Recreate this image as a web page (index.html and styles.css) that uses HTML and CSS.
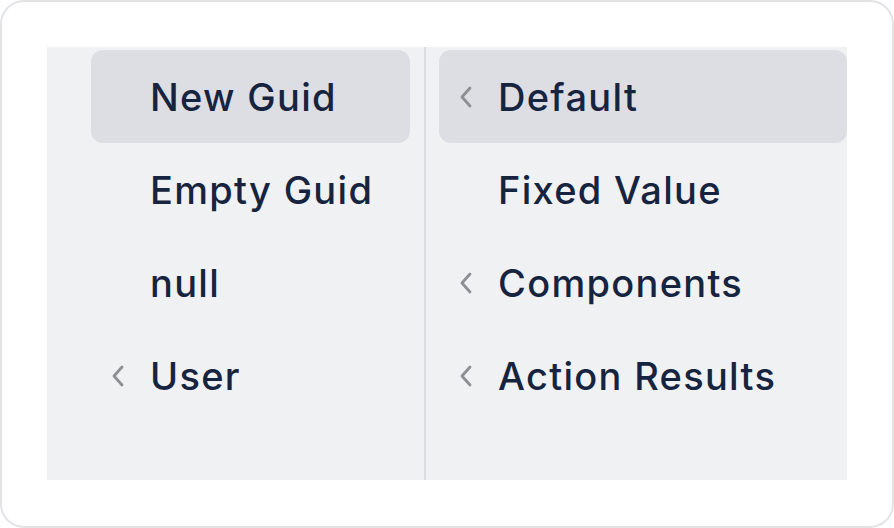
FILE: index.html
```html
<!DOCTYPE html>
<html>
<head>
<meta charset="utf-8">
<link rel="stylesheet" href="styles.css">
</head>
<body>
<div class="card">
  <div class="panel">
    <div class="col col-left">
      <div class="item active"><span class="chev"></span><span class="label">New Guid</span></div>
      <div class="item"><span class="chev"></span><span class="label">Empty Guid</span></div>
      <div class="item"><span class="chev"></span><span class="label">null</span></div>
      <div class="item"><span class="chev"><svg viewBox="0 0 14 22" width="14" height="22"><polyline points="11,2 3,11 11,20"/></svg></span><span class="label">User</span></div>
    </div>
    <div class="col col-right">
      <div class="item active"><span class="chev"><svg viewBox="0 0 14 22" width="14" height="22"><polyline points="11,2 3,11 11,20"/></svg></span><span class="label">Default</span></div>
      <div class="item"><span class="chev"></span><span class="label">Fixed Value</span></div>
      <div class="item"><span class="chev"><svg viewBox="0 0 14 22" width="14" height="22"><polyline points="11,2 3,11 11,20"/></svg></span><span class="label">Components</span></div>
      <div class="item"><span class="chev"><svg viewBox="0 0 14 22" width="14" height="22"><polyline points="11,2 3,11 11,20"/></svg></span><span class="label">Action Results</span></div>
    </div>
  </div>
</div>
</body>
</html>
```
FILE: styles.css
```css
html, body {
  margin: 0;
  padding: 0;
  background: #ffffff;
}
.card {
  box-sizing: border-box;
  width: 894px;
  height: 528px;
  border: 2px solid #e2e4e8;
  border-radius: 24px;
  padding: 45px;
  background: #ffffff;
}
.panel {
  width: 800px;
  height: 433px;
  background: #f0f1f3;
  display: flex;
}
.col {
  box-sizing: border-box;
  padding-top: 3px;
  display: flex;
  flex-direction: column;
}
.col-left {
  width: 379px;
  padding-left: 44px;
  padding-right: 14px;
  border-right: 2px solid #dcdde2;
}
.col-right {
  flex: 1;
  padding-left: 13px;
}
.item {
  height: 93px;
  border-radius: 12px;
  display: flex;
  align-items: center;
  padding-left: 20px;
  font-family: Inter, "Noto Sans", sans-serif;
  font-size: 38px;
  font-weight: 500;
  letter-spacing: 1.3px;
  color: #16243f;
}
.item.active {
  background: #dddee3;
}
.chev {
  width: 14px;
  height: 22px;
  margin-right: 25px;
  display: flex;
}
.chev svg polyline {
  fill: none;
  stroke: #8e8f93;
  stroke-width: 2.8;
  stroke-linecap: round;
  stroke-linejoin: round;
}
.label {
  white-space: nowrap;
}
```
